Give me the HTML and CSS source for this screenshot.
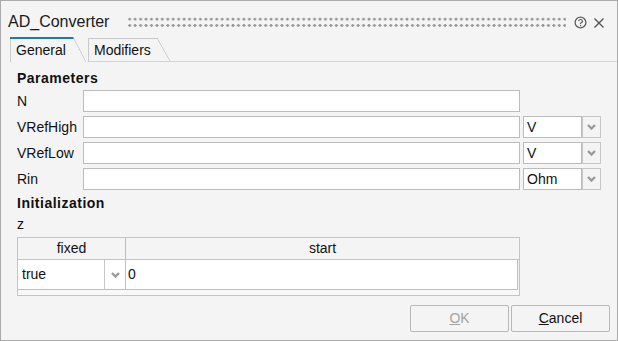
FILE: index.html
```html
<!doctype html>
<html>
  <head>
    <title>AD_Converter</title>
    <link rel="stylesheet" href="styles.css">
  </head>
  <body>
    <div id="window">
      <div id="titlebar">
        <span id="title">AD_Converter</span>
        <div id="grip"></div>
        <svg class="icon help" width="13" height="13" viewBox="0 0 13 13">
          <circle cx="6.5" cy="6.5" r="5.4" fill="none" stroke="#5e5e5e" stroke-width="1.3"/>
          <path d="M4.8 5.3 A1.8 1.7 0 1 1 7.2 6.8 C6.7 7.1 6.5 7.4 6.5 8.1" fill="none" stroke="#5e5e5e" stroke-width="1.2"/>
          <circle cx="6.5" cy="9.6" r="0.75" fill="#5e5e5e"/>
        </svg>
        <svg class="icon close" width="12" height="12" viewBox="0 0 12 12">
          <path d="M1.5 1.5 L10.5 10.5 M10.5 1.5 L1.5 10.5" stroke="#555" stroke-width="1.4"/>
        </svg>
      </div>

      <div id="tabs">
        <div class="tab active">General</div>
        <div class="tab">Modifiers</div>
        <div class="tabfill"></div>
      </div>

      <div id="content">
        <div class="heading">Parameters</div>
        <div class="rows">
          <div class="row">
            <span class="label">N</span>
            <div class="field"></div>
          </div>
          <div class="row">
            <span class="label">VRefHigh</span>
            <div class="field"></div>
            <div class="unit">V</div>
            <div class="drop"><svg width="9" height="6" viewBox="0 0 9 6"><path d="M1 1 L4.5 4.5 L8 1" fill="none" stroke="#9a9a9a" stroke-width="2.4"/></svg></div>
          </div>
          <div class="row">
            <span class="label">VRefLow</span>
            <div class="field"></div>
            <div class="unit">V</div>
            <div class="drop"><svg width="9" height="6" viewBox="0 0 9 6"><path d="M1 1 L4.5 4.5 L8 1" fill="none" stroke="#9a9a9a" stroke-width="2.4"/></svg></div>
          </div>
          <div class="row">
            <span class="label">Rin</span>
            <div class="field"></div>
            <div class="unit">Ohm</div>
            <div class="drop"><svg width="9" height="6" viewBox="0 0 9 6"><path d="M1 1 L4.5 4.5 L8 1" fill="none" stroke="#9a9a9a" stroke-width="2.4"/></svg></div>
          </div>
        </div>

        <div class="heading init">Initialization</div>
        <div class="varname">z</div>

        <div class="table">
          <div class="th first">fixed</div>
          <div class="th">start</div>
          <div class="td first">
            <span class="combo">true</span>
            <span class="cellbtn"><svg width="9" height="6" viewBox="0 0 9 6"><path d="M1 1 L4.5 4.5 L8 1" fill="none" stroke="#9a9a9a" stroke-width="2.4"/></svg></span>
          </div>
          <div class="td value">0</div>
          <div class="tfoot"></div>
        </div>
      </div>

      <div id="footer">
        <div class="button disabled"><u>O</u>K</div>
        <div class="button"><u>C</u>ancel</div>
      </div>
    </div>
  </body>
</html>
```

FILE: styles.css
```css
body {
  margin: 0;
  font-family: "Liberation Sans", Arial, sans-serif;
  font-size: 14px;
  color: #111;
}

#window {
  width: 618px;
  height: 341px;
  box-sizing: border-box;
  border: 1px solid #ababab;
  background-color: #f4f4f4;
  display: flex;
  flex-direction: column;
}

#titlebar {
  height: 36px;
  box-sizing: border-box;
  padding: 11px 12px 0 7px;
  display: flex;
  align-items: flex-start;
}

#title {
  font-size: 16px;
  line-height: 20px;
  color: #1a1a1a;
}

#grip {
  flex: 1;
  height: 12px;
  margin: 4px 8px 0 18px;
  background-image: radial-gradient(circle, #999 32%, transparent 40%);
  background-size: 5.45px 6.3px;
}

.icon {
  margin-top: 4px;
}

.icon.close {
  margin-top: 5px;
  margin-left: 6px;
}

#tabs {
  display: flex;
  height: 25px;
  padding-left: 9px;
}

.tab {
  position: relative;
  box-sizing: border-box;
  width: 82px;
  height: 24px;
  margin-top: 1px;
  margin-left: 2px;
  padding-left: 5px;
  border-left: 1px solid #c9c9c9;
  border-bottom: 1px solid #d4d4d4;
  display: flex;
  align-items: center;
}

.tab.active {
  width: 76px;
  height: 25px;
  margin: 0;
  border-bottom: none;
}

.tab::before {
  content: "";
  position: absolute;
  top: 0;
  left: -1px;
  right: 12px;
  height: 1px;
  background-color: #c9c9c9;
}

.tab.active::before {
  height: 2px;
  background-color: #1d77b2;
}

.tab::after {
  content: "";
  position: absolute;
  top: 0;
  right: 0;
  bottom: 0;
  width: 13px;
  background: linear-gradient(to top right, transparent calc(50% - 0.7px), #c4c4c4 50%, transparent calc(50% + 0.7px));
}

.tabfill {
  flex: 1;
  border-bottom: 1px solid #d4d4d4;
}

#content {
  padding: 0 16px;
  display: flex;
  flex-direction: column;
}

.heading {
  font-weight: bold;
  line-height: 16px;
  margin-top: 8px;
  letter-spacing: 0.5px;
}

.heading.init {
  margin-top: 5px;
}

.rows {
  display: flex;
  flex-direction: column;
  gap: 4px;
  margin-top: 4px;
}

.row {
  display: flex;
  height: 22px;
}

.label {
  width: 66px;
  line-height: 22px;
}

.field {
  width: 437px;
  box-sizing: border-box;
  border: 1px solid #bcbcbc;
  background-color: #fff;
}

.unit {
  width: 59px;
  margin-left: 3px;
  box-sizing: border-box;
  border: 1px solid #bcbcbc;
  background-color: #fff;
  padding-left: 3px;
  line-height: 20px;
}

.drop {
  width: 19px;
  box-sizing: border-box;
  border: 1px solid #c6c6c6;
  display: flex;
  align-items: center;
  justify-content: center;
}

.varname {
  line-height: 16px;
  margin-top: 5px;
}

.table {
  margin-top: 5px;
  width: 503px;
  box-sizing: border-box;
  border: 1px solid #c4c4c4;
  display: grid;
  grid-template-columns: 108px 1fr;
}

.th {
  height: 21px;
  line-height: 21px;
  text-align: center;
  border-bottom: 1px solid #c4c4c4;
}

.th.first,
.td.first {
  border-right: 1px solid #bdbdbd;
}

.td {
  height: 29px;
  border-bottom: 1px solid #bdbdbd;
  background-color: #fff;
}

.td.first {
  display: flex;
}

.combo {
  flex: 1;
  line-height: 29px;
  padding-left: 4px;
}

.cellbtn {
  width: 20px;
  border-left: 1px solid #c6c6c6;
  display: flex;
  align-items: center;
  justify-content: center;
}

.td.value {
  line-height: 29px;
  padding-left: 2px;
  margin-right: 1px;
  border-right: 1px solid #bdbdbd;
}

.tfoot {
  grid-column: 1 / 3;
  height: 5px;
  background-color: #f8f8f8;
}

#footer {
  margin-top: auto;
  display: flex;
  justify-content: flex-end;
  gap: 2px;
  padding: 0 7px 8px 0;
}

.button {
  width: 99px;
  height: 27px;
  box-sizing: border-box;
  border: 1px solid #b8b8b8;
  border-radius: 2px;
  text-align: center;
  line-height: 25px;
}

.button.disabled {
  color: #a3a3a3;
}
```
